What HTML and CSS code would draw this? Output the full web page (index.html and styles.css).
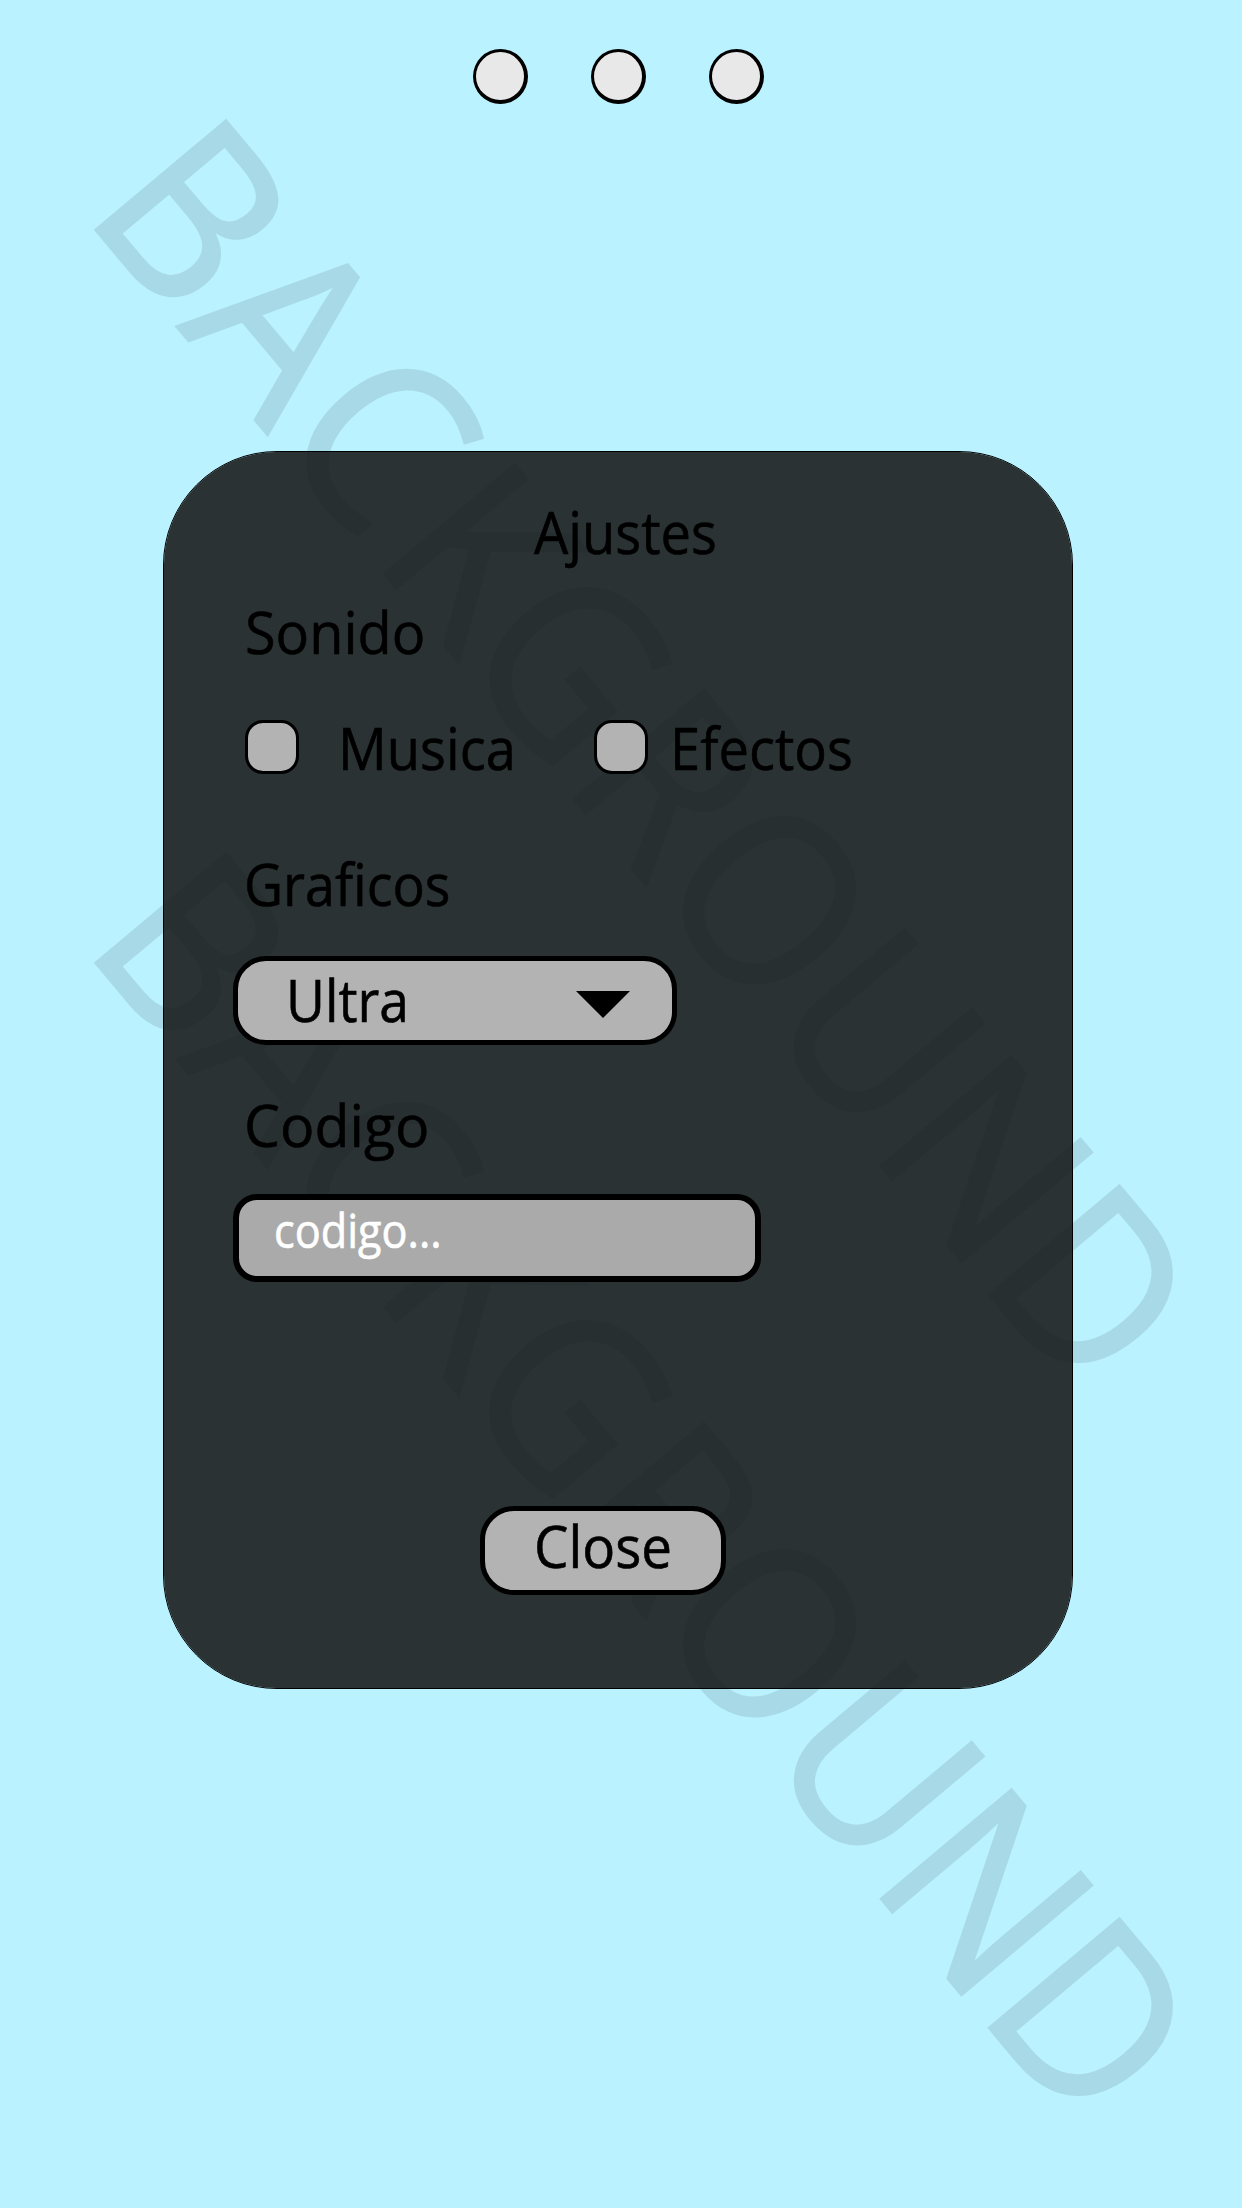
FILE: index.html
```html
<!DOCTYPE html>
<html lang="es">
<head>
<meta charset="utf-8">
<title>Ajustes</title>
<link rel="stylesheet" href="styles.css">
</head>
<body>
<svg class="backdrop" viewBox="0 0 1242 2208" aria-hidden="true">
  <g opacity=".093">
    <text class="mark" transform="translate(95 229) rotate(50) scale(.94 1)" x="-22 135.5 292.5 456 594 769 916 1103 1278 1457">BACKGROUND</text>
    <text class="mark" transform="translate(95 962) rotate(50) scale(.94 1)" x="-22 135.5 292.5 456 594 769 916 1103 1278 1457">BACKGROUND</text>
  </g>
</svg>
<header class="dots">
  <span class="dot"></span><span class="dot"></span><span class="dot"></span>
</header>
<main class="panel">
  <h1 class="text title"><span class="fit fit-title">Ajustes</span></h1>
  <h2 class="text sound"><span class="fit fit-sound">Sonido</span></h2>
  <div class="checks">
    <span class="check"></span><span class="text music"><span class="fit fit-music">Musica</span></span>
    <span class="check"></span><span class="text effects"><span class="fit fit-effects">Efectos</span></span>
  </div>
  <h2 class="text graphics"><span class="fit fit-graphics">Graficos</span></h2>
  <div class="select text">
    <span class="fit fit-ultra">Ultra</span>
    <svg class="arrow" viewBox="0 0 54 27"><path d="M0 0H54L27 27Z"/></svg>
  </div>
  <h2 class="text code"><span class="fit fit-code">Codigo</span></h2>
  <div class="input"><span class="fit fit-input">codigo...</span></div>
  <button class="close text"><span class="fit fit-close">Close</span></button>
</main>
</body>
</html>
```

FILE: styles.css
```css
* { box-sizing: border-box; }

body {
  position: relative;
  margin: 0;
  width: 1242px;
  height: 2208px;
  overflow: hidden;
  background: #baf2ff;
  color: #000;
  font-family: "Open Sans", "Noto Sans", sans-serif;
}

.backdrop {
  position: absolute;
  inset: 0;
  width: 1242px;
  height: 2208px;
}

.mark {
  font-size: 238px;
  fill: #000;
  stroke: #000;
  stroke-width: 3px;
}

.dots {
  position: relative;
  display: flex;
  gap: 63px;
  padding: 49px 0 0 473px;
}

.dot {
  width: 55px;
  height: 55px;
  border: solid #000;
  border-width: 3px 4px 4px 3px;
  border-radius: 50%;
  background: #e8e8e8;
}

.panel {
  position: relative;
  display: flex;
  flex-direction: column;
  align-items: flex-start;
  width: 910px;
  height: 1238px;
  margin: 347px 0 0 163px;
  padding-top: 49px;
  border: 1px solid #000;
  border-radius: 114px;
  background: rgba(22, 23, 24, .88);
  background-clip: padding-box;
}

.text {
  margin: 0;
  font-size: 59px;
  font-weight: 400;
  line-height: 60px;
  white-space: nowrap;
}

/* Condenses a label a little without changing its height. */
.fit {
  display: inline-block;
  transform-origin: 0 50%;
  transform: scaleX(.92);
  -webkit-text-stroke: .6px currentColor;
}

.fit-sound { transform: scaleX(.946); }
.fit-graphics { transform: scaleX(.912); }
.fit-ultra { transform: scaleX(.905); }
.fit-code { transform: scaleX(.97); }
.fit-close { transform: scaleX(.928); }

.title { margin-left: 370px; }

.sound {
  margin: 40px 0 0 81px;
}

.checks {
  display: flex;
  align-items: center;
  height: 60px;
  margin: 56px 0 0 81px;
}

.check {
  width: 54px;
  height: 54px;
  border: 3px solid #000;
  border-radius: 18px;
  background: #b3b3b3;
}

.music {
  width: 256px;
  margin-left: 39px;
}

.effects { margin-left: 22px; }

.graphics { margin: 76px 0 0 80px; }

.select {
  display: flex;
  justify-content: space-between;
  width: 444px;
  height: 89px;
  margin: 43px 0 0 69px;
  padding: 8px 42px 0 48px;
  border: 5px solid #000;
  border-radius: 33px;
  background: #b3b3b3;
}

.arrow {
  width: 54px;
  height: 27px;
  margin-top: 22px;
}

.code { margin: 49px 0 0 80px; }

.input {
  width: 528px;
  height: 88px;
  margin: 40px 0 0 69px;
  border: 6px solid #000;
  border-radius: 24px;
  background: #aaa;
  padding-left: 35px;
  color: #fff;
  font-size: 47px;
  line-height: 60px;
}

.close {
  width: 246px;
  height: 89px;
  margin: 224px 0 0 316px;
  padding: 4px 0 0 49px;
  border: 5px solid #000;
  border-radius: 34px;
  background: #b3b3b3;
  color: #000;
  font-family: inherit;
  text-align: left;
  display: flex;
}
```
